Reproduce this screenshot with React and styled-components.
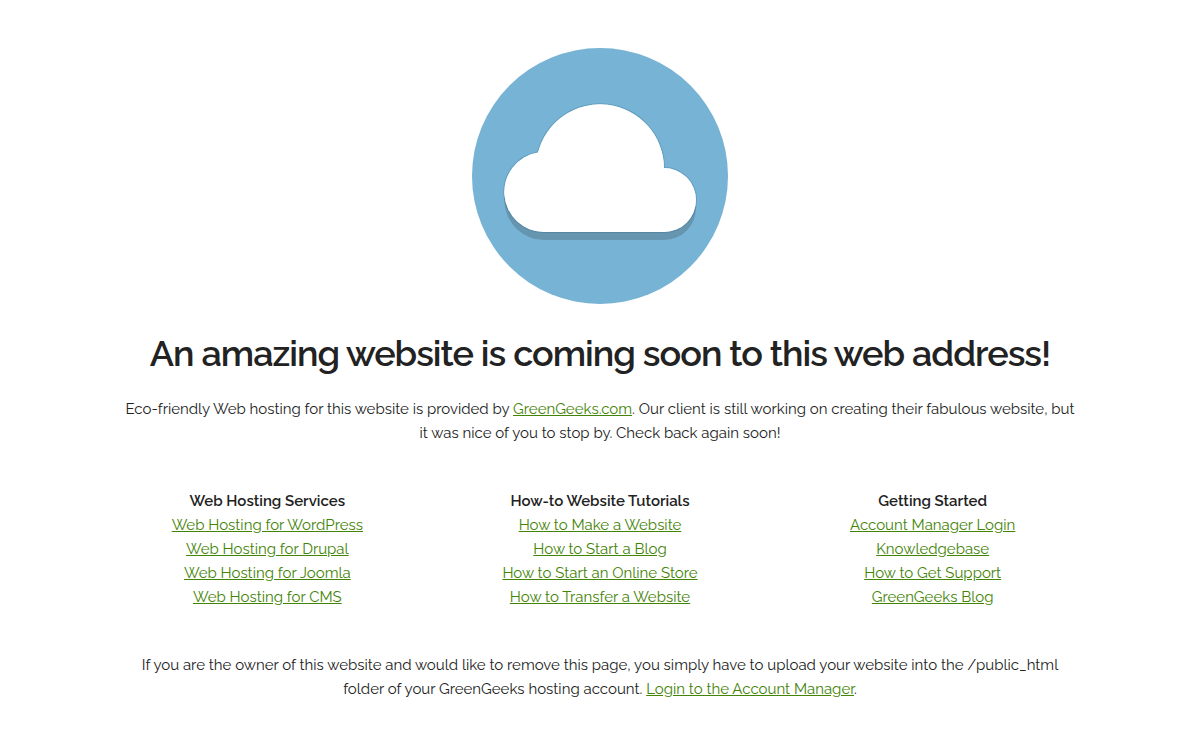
import React from "react";
import styled, { createGlobalStyle } from "styled-components";

const GlobalStyle = createGlobalStyle`
  *, *::before, *::after { box-sizing: border-box; }
  body {
    margin: 0;
    background: #fff;
    color: #222;
    font-family: Raleway, Lato, "Open Sans", sans-serif;
    font-size: 15px;
    line-height: 24px;
    font-weight: 400;
  }
`;

const Container = styled.main`
  max-width: 960px;
  margin: 0 auto;
  padding: 48px 0 36px;
  text-align: center;
`;

const CloudBadge = styled.svg`
  display: block;
  width: 256px;
  height: 256px;
  margin: 0 auto 27px;
`;

const Title = styled.h1`
  margin: 0 0 22px;
  font-size: 36px;
  line-height: 44px;
  font-weight: 600;
  letter-spacing: -1px;
`;

const Text = styled.p`
  margin: 0;
`;

const Link = styled.a`
  color: #438306;
  text-decoration: underline;
`;

const Columns = styled.div`
  display: grid;
  grid-template-columns: repeat(3, 1fr);
  gap: 38px;
  margin: 44px 0;
`;

const ColumnTitle = styled.h2`
  margin: 0;
  font-size: 15px;
  line-height: 24px;
  font-weight: 600;
`;

const LinkList = styled.ul`
  margin: 0;
  padding: 0;
  list-style: none;
`;

const columns = [
  {
    title: "Web Hosting Services",
    links: ["Web Hosting for WordPress", "Web Hosting for Drupal", "Web Hosting for Joomla", "Web Hosting for CMS"],
  },
  {
    title: "How-to Website Tutorials",
    links: ["How to Make a Website", "How to Start a Blog", "How to Start an Online Store", "How to Transfer a Website"],
  },
  {
    title: "Getting Started",
    links: ["Account Manager Login", "Knowledgebase", "How to Get Support", "GreenGeeks Blog"],
  },
];

const cloudPath = "M72 184H192a32 32 0 0 0 0-64A64 64 0 0 0 66 104.5A40 40 0 0 0 72 184Z";

function Cloud() {
  return (
    <CloudBadge viewBox="0 0 256 256" aria-hidden="true">
      <circle cx="128" cy="128" r="128" fill="#77b3d4" />
      <path d={cloudPath} transform="translate(0 8)" fill="#231f20" opacity="0.2" />
      <path d={cloudPath} fill="#fff" stroke="#1f5f85" strokeOpacity="0.25" strokeWidth="2" />
      <path d={cloudPath} fill="#fff" />
    </CloudBadge>
  );
}

export default function App() {
  return (
    <>
      <GlobalStyle />
      <Container>
        <Cloud />
        <Title>An amazing website is coming soon to this web address!</Title>
        <Text>
          Eco-friendly Web hosting for this website is provided by <Link href="#greengeeks">GreenGeeks.com</Link>. Our
          client is still working on creating their fabulous website, but it was nice of you to stop by. Check back
          again soon!
        </Text>
        <Columns>
          {columns.map(({ title, links }) => (
            <section key={title}>
              <ColumnTitle>{title}</ColumnTitle>
              <LinkList>
                {links.map((label) => (
                  <li key={label}>
                    <Link href="#">{label}</Link>
                  </li>
                ))}
              </LinkList>
            </section>
          ))}
        </Columns>
        <Text>
          If you are the owner of this website and would like to remove this page, you simply have to upload your
          website into the /public_html folder of your GreenGeeks hosting account.{" "}
          <Link href="#login">Login to the Account Manager</Link>.
        </Text>
      </Container>
    </>
  );
}
